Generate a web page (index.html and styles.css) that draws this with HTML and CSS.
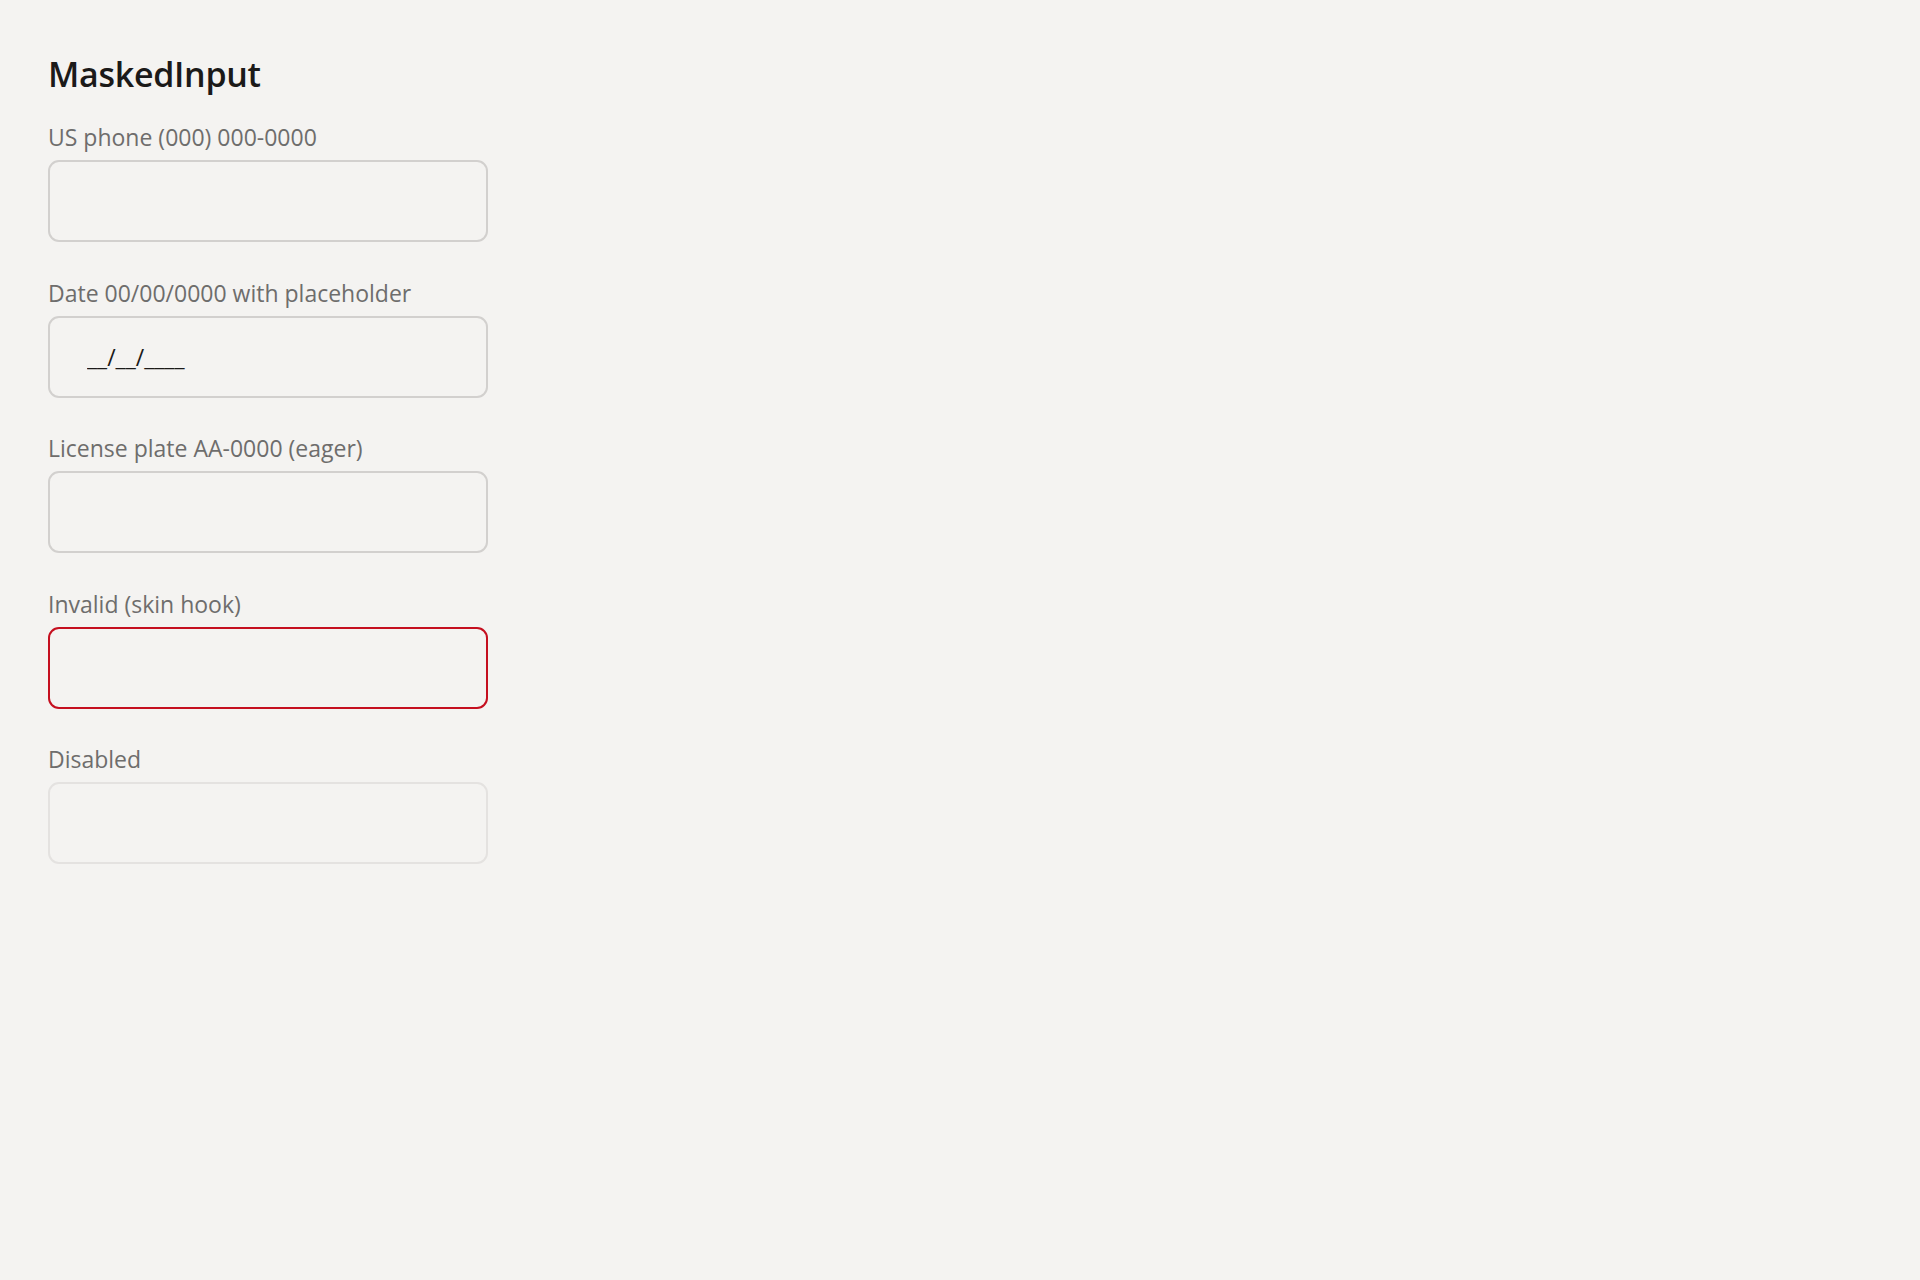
FILE: index.html
```html
<!DOCTYPE html>
<html lang="en">
<head>
    <meta charset="UTF-8">
    <meta name="viewport" content="width=device-width, initial-scale=1.0">
    <title>MaskedInput</title>
    <link rel="stylesheet" href="styles.css">
</head>
<body>

    <div class="page">
        <h1>MaskedInput</h1>

        <!-- each field: label + masked input -->
        <div class="fields">
            <div class="field">
                <label for="phone">US phone (000) 000-0000</label>
                <input class="masked" id="phone" type="text">
            </div>

            <div class="field">
                <label for="date">Date 00/00/0000 with placeholder</label>
                <input class="masked" id="date" type="text" placeholder="__/__/____">
            </div>

            <div class="field">
                <label for="plate">License plate AA-0000 (eager)</label>
                <input class="masked" id="plate" type="text">
            </div>

            <div class="field">
                <label for="invalid">Invalid (skin hook)</label>
                <input class="masked invalid" id="invalid" type="text">
            </div>

            <div class="field">
                <label for="disabled">Disabled</label>
                <input class="masked" id="disabled" type="text" disabled>
            </div>
        </div>
    </div>

</body>
</html>
```

FILE: styles.css
```css
body {
    font-family: "Open Sans", "Noto Sans", Arial, sans-serif;
    background-color: #f4f3f1;
    margin: 0;
    padding: 0;
}
.page {
    width: 440px;
    padding: 52px 0 0 48px;
}
h1 {
    margin: 0 0 25px 0;
    font-size: 34px;
    font-weight: 600;
    line-height: 44px;
    color: #1b1a19;
    letter-spacing: -0.3px;
}
.fields {
    display: flex;
    flex-direction: column;
    gap: 34.5px;
}
.field {
    display: flex;
    flex-direction: column;
    gap: 7px;
}
label {
    font-size: 23px;
    line-height: 32px;
    color: #6e6d6c;
}
.masked {
    box-sizing: border-box;
    width: 440px;
    height: 82px;
    padding: 0 37px;
    font-family: inherit;
    font-size: 23px;
    color: #1b1a19;
    background-color: #f4f3f1;
    border: 2px solid #d2d0ce;
    border-radius: 11px;
    outline: none;
}
.masked::placeholder {
    color: #1b1a19;
    opacity: 1;
}
.masked.invalid {
    border-color: #c50f1f;
}
.masked:disabled {
    border-color: #e4e2e0;
}
```
